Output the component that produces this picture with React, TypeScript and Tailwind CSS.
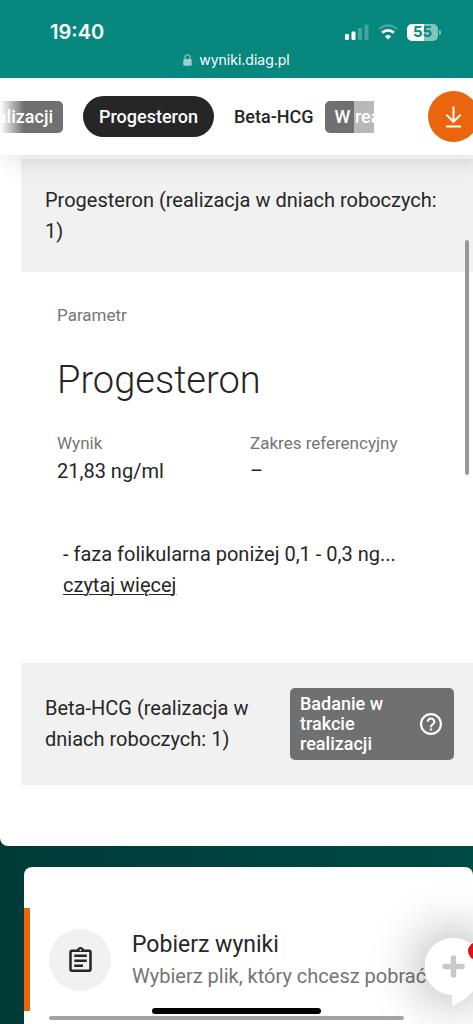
import React from "react";

function StatusBar() {
  return (
    <header className="relative z-20 flex h-[78px] shrink-0 flex-col bg-[#06887e] text-white">
      <div className="flex items-center justify-between pt-[18px] pr-8 pl-[50px] font-['Inter',sans-serif]">
        <time className="text-xl leading-7 font-semibold">19:40</time>
        <div className="flex items-center gap-[9px]">
          <svg width="24" height="16" viewBox="0 0 24 16" fill="white" aria-hidden="true">
            <rect x="0" y="10" width="4" height="6" rx="1.2" />
            <rect x="6.5" y="7.5" width="4" height="8.5" rx="1.2" />
            <rect x="13" y="4" width="4" height="12" rx="1.2" opacity=".25" />
            <rect x="19.5" y="0.5" width="4" height="15.5" rx="1.2" opacity=".25" />
          </svg>
          <svg width="20" height="16" viewBox="0 0 20 16" fill="none" stroke="white" aria-hidden="true">
            <path d="M1.2 5.2a12.5 12.5 0 0 1 17.6 0" strokeWidth="2.5" opacity=".25" />
            <path d="M4.1 8.8a8.5 8.5 0 0 1 11.8 0" strokeWidth="2.6" />
            <path d="M10 15.6 6.9 12.3a4.4 4.4 0 0 1 6.2 0Z" fill="white" stroke="none" />
          </svg>
          <div className="flex items-center gap-px">
            <div className="flex h-[17px] w-[31px] items-center justify-center rounded-[5px] bg-linear-to-r from-white from-55% to-[#84c4bf] to-55% text-[15px] leading-4 font-bold text-[#06887e]">
              55
            </div>
            <span className="h-[5px] w-0.5 rounded-r-full bg-[#84c4bf]" />
          </div>
        </div>
      </div>
      <div className="flex items-center justify-center gap-[7px] pt-1 font-['Inter',sans-serif]">
        <svg width="9" height="12" viewBox="0 0 9 12" fill="none" className="opacity-60" aria-hidden="true">
          <rect x="0.3" y="5" width="8.4" height="6.8" rx="1.3" fill="white" />
          <path d="M2 5.5V3.2a2.5 2.5 0 0 1 5 0v2.3" stroke="white" strokeWidth="1.1" />
        </svg>
        <span className="text-sm leading-5">wyniki.diag.pl</span>
      </div>
    </header>
  );
}

function Tabs() {
  return (
    <nav className="relative z-10 flex h-[77px] shrink-0 items-center justify-between bg-white shadow-[8px_4px_24px_2px_rgba(0,0,0,0.12)]">
      <div className="relative flex w-[374px] items-center overflow-hidden text-lg font-medium">
        <div className="flex w-[63px] shrink-0 justify-end">
          <span className="shrink-0 rounded-[5px] bg-[#707070] px-[10px] leading-8 whitespace-nowrap text-white">
            W realizacji
          </span>
        </div>
        <button type="button" className="ml-5 h-[41px] shrink-0 rounded-full bg-[#262626] px-4 text-white">
          Progesteron
        </button>
        <button type="button" className="ml-5 flex shrink-0 items-center gap-[11px] text-[#262626]">
          Beta-HCG
          <span className="rounded-[5px] bg-[#707070] px-[10px] leading-8 whitespace-nowrap text-white">W realizacji</span>
        </button>
        <div className="absolute inset-y-0 left-0 w-6 bg-linear-to-r from-white to-white/0" />
        <div className="absolute inset-y-0 right-0 w-5 bg-white/50" />
      </div>
      <button
        type="button"
        aria-label="Pobierz"
        className="-mr-[6px] flex size-[51px] shrink-0 items-center justify-center rounded-full bg-[#ea650d]"
      >
        <svg width="18" height="22" viewBox="0 0 18 22" fill="none" stroke="white" strokeWidth="2" aria-hidden="true">
          <path d="M8.5 0.5v15M1.3 8.6 8.5 15.8l7.2-7.2M1 20.5h15" />
        </svg>
      </button>
    </nav>
  );
}

function Results() {
  return (
    <main className="shrink-0 rounded-bl-lg bg-white pt-1 pb-[61px] pl-[21px] text-[#262626]">
      <h2 className="bg-[#f1f1f1] pt-[26px] pr-4 pb-[25px] pl-6 text-xl leading-[31px]">
        Progesteron (realizacja w dniach roboczych: 1)
      </h2>
      <section className="px-9 pt-[31px] pb-[62px]">
        <p className="text-[17px] leading-6 text-[#757575]">Parametr</p>
        <h1 className="pt-[29px] text-[38px] leading-[48px] font-light">Progesteron</h1>
        <dl className="grid grid-cols-2 gap-x-[6px] pt-[27px]">
          <div>
            <dt className="text-[17px] leading-6 text-[#757575]">Wynik</dt>
            <dd className="text-xl leading-8">21,83 ng/ml</dd>
          </div>
          <div>
            <dt className="text-[17px] leading-6 text-[#757575]">Zakres referencyjny</dt>
            <dd className="text-xl leading-8">–</dd>
          </div>
        </dl>
        <p className="pt-[52px] pl-[6px] text-xl leading-[31px]">
          - faza folikularna poniżej 0,1 - 0,3 ng...
          <br />
          <a href="#opis" className="underline decoration-1 underline-offset-2">czytaj więcej</a>
        </p>
      </section>
      <section className="flex items-center justify-between gap-8 bg-[#f1f1f1] py-[25px] pr-[19px] pl-6">
        <h2 className="text-xl leading-[31px]">Beta-HCG (realizacja w dniach roboczych: 1)</h2>
        <div className="flex w-[164px] shrink-0 items-center justify-between rounded-[5px] bg-[#707070] py-[6px] pr-3 pl-[10px] text-white">
          <span className="w-24 text-lg leading-5 font-medium">Badanie w trakcie realizacji</span>
          <button type="button" aria-label="Informacja">
            <svg width="22" height="22" viewBox="2 2 20 20" fill="white" aria-hidden="true">
              <path d="M11 18h2v-2h-2v2zm1-16C6.48 2 2 6.48 2 12s4.48 10 10 10 10-4.48 10-10S17.52 2 12 2zm0 18c-4.41 0-8-3.59-8-8s3.59-8 8-8 8 3.59 8 8-3.59 8-8 8zm0-14c-2.21 0-4 1.79-4 4h2c0-1.1.9-2 2-2s2 .9 2 2c0 2-3 1.75-3 5h2c0-2.25 3-2.5 3-5 0-2.21-1.79-4-4-4z" />
            </svg>
          </button>
        </div>
      </section>
    </main>
  );
}

function DownloadCard() {
  return (
    <section className="mt-[21px] ml-6 flex-1 rounded-t-lg bg-white pt-[41px]">
      <div className="flex h-[103px] items-center gap-[21px] border-l-[6px] border-[#ea650d] pl-[19px]">
        <span className="flex size-[62px] shrink-0 items-center justify-center rounded-full bg-[#f1f1f1]">
          <svg width="23" height="25" viewBox="3 1 18 20" fill="#262626" aria-hidden="true">
            <path d="M7 15h7v2H7zm0-4h10v2H7zm0-4h10v2H7zm12-4h-4.18C14.4 1.84 13.3 1 12 1c-1.3 0-2.4.84-2.82 2H5c-1.1 0-2 .9-2 2v14c0 1.1.9 2 2 2h14c1.1 0 2-.9 2-2V5c0-1.1-.9-2-2-2zm-7-.25c.41 0 .75.34.75.75s-.34.75-.75.75-.75-.34-.75-.75.34-.75.75-.75zM19 19H5V5h14v14z" />
          </svg>
        </span>
        <div className="whitespace-nowrap">
          <h3 className="text-[23px] leading-8 text-[#262626]">Pobierz wyniki</h3>
          <p className="text-xl leading-[30px] text-[#757575]">Wybierz plik, który chcesz pobrać</p>
        </div>
      </div>
    </section>
  );
}

export default function App() {
  return (
    <div className="relative flex min-h-screen flex-col overflow-hidden bg-linear-to-r from-[#003a37] to-[#004a45] font-['Roboto',sans-serif]">
      <StatusBar />
      <Tabs />
      <Results />
      <DownloadCard />
      <div className="absolute top-60 right-[4px] h-[235px] w-1 rounded-full bg-[#989898]" />
      <button type="button" aria-label="Czat" className="absolute -right-[9px] bottom-[18px] h-[68px] w-[57px]">
        <span className="absolute top-0 left-0 size-[57px] rounded-full shadow-[0_0_48px_10px_rgba(0,0,0,0.26)]" />
        <svg className="relative" width="57" height="68" viewBox="0 0 57 68" aria-hidden="true">
          <path d="M28.5 0A28.5 28.5 0 0 1 57 28.5C57 49 42 62 27 68V57A28.5 28.5 0 0 1 28.5 0Z" fill="white" />
          <path d="M28.5 20v17M20 28.5h17" stroke="#c9c9c9" strokeWidth="5.5" strokeLinecap="round" />
          <circle cx="52" cy="13" r="10" fill="white" />
          <circle cx="52" cy="13" r="9" fill="#ea0a14" />
        </svg>
      </button>
      <div className="absolute bottom-[4px] left-[49px] h-1 w-[355px] rounded-full bg-[#a3a3a3]" />
      <div className="absolute inset-x-0 bottom-[10px] flex justify-center">
        <span className="h-[6px] w-[169px] rounded-full bg-black" />
      </div>
    </div>
  );
}
